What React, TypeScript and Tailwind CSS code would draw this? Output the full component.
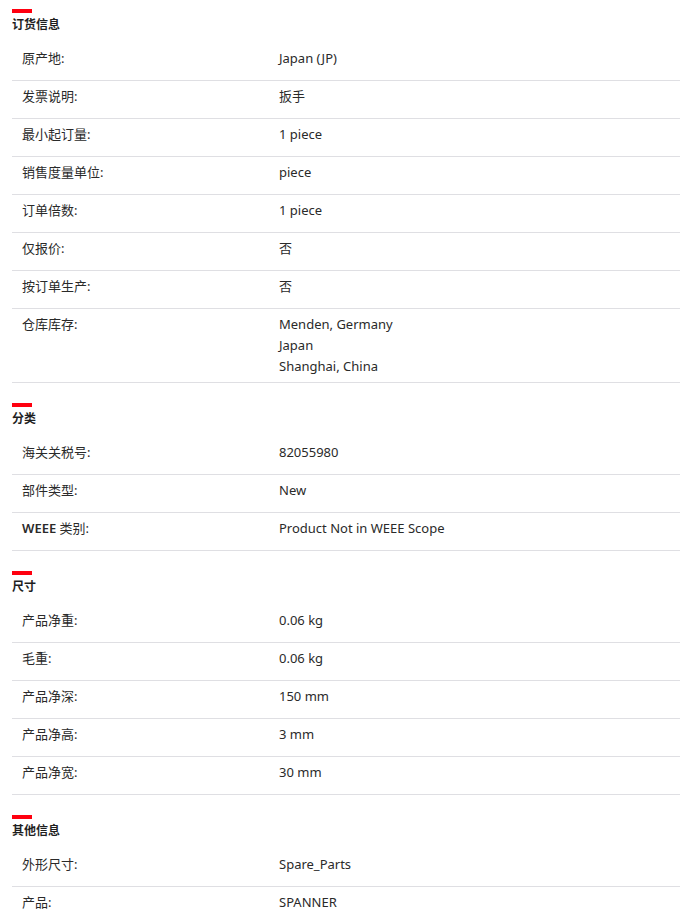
import React from 'react';

type Row = { label: React.ReactNode; value: string[] };

interface Section {
  title: string;
  rows: Row[];
}

const sections: Section[] = [
  {
    title: '订货信息',
    rows: [
      { label: '原产地:', value: ['Japan (JP)'] },
      { label: '发票说明:', value: ['扳手'] },
      { label: '最小起订量:', value: ['1 piece'] },
      { label: '销售度量单位:', value: ['piece'] },
      { label: '订单倍数:', value: ['1 piece'] },
      { label: '仅报价:', value: ['否'] },
      { label: '按订单生产:', value: ['否'] },
      { label: '仓库库存:', value: ['Menden, Germany', 'Japan', 'Shanghai, China'] },
    ],
  },
  {
    title: '分类',
    rows: [
      { label: '海关关税号:', value: ['82055980'] },
      { label: '部件类型:', value: ['New'] },
      {
        label: (
          <>
            <span className="font-semibold">WEEE</span> 类别:
          </>
        ),
        value: ['Product Not in WEEE Scope'],
      },
    ],
  },
  {
    title: '尺寸',
    rows: [
      { label: '产品净重:', value: ['0.06 kg'] },
      { label: '毛重:', value: ['0.06 kg'] },
      { label: '产品净深:', value: ['150 mm'] },
      { label: '产品净高:', value: ['3 mm'] },
      { label: '产品净宽:', value: ['30 mm'] },
    ],
  },
  {
    title: '其他信息',
    rows: [
      { label: '外形尺寸:', value: ['Spare_Parts'] },
      { label: '产品:', value: ['SPANNER'] },
    ],
  },
];

const SpecSection: React.FC<{ section: Section }> = ({ section }) => (
  <div>
    <div className="h-[4px] w-[20px] bg-[#ff000f]" />
    <h3 className="mt-[4px] mb-[10px] text-[12px] leading-[16px] font-bold text-[#1f1f1f]">
      {section.title}
    </h3>
    <div>
      {section.rows.map((row, i) => (
        <div
          key={i}
          className="grid grid-cols-[267px_1fr] min-h-[38px] border-b border-[#dfdfe3] pt-[5px] pb-[5px] text-[13px] leading-[21px] text-[#2a2a2a]"
        >
          <div className="pl-[10px]">{row.label}</div>
          <div>
            {row.value.map((v) => (
              <div key={v}>{v}</div>
            ))}
          </div>
        </div>
      ))}
    </div>
  </div>
);

export default function App() {
  return (
    <div
      className="min-h-[919px] bg-white pt-[9px] pl-[12px] pr-[1px]"
      style={{ fontFamily: '"Noto Sans", "Noto Sans CJK SC", sans-serif' }}
    >
      <div className="flex flex-col gap-[20px]">
        {sections.map((s) => (
          <SpecSection key={s.title} section={s} />
        ))}
      </div>
    </div>
  );
}
